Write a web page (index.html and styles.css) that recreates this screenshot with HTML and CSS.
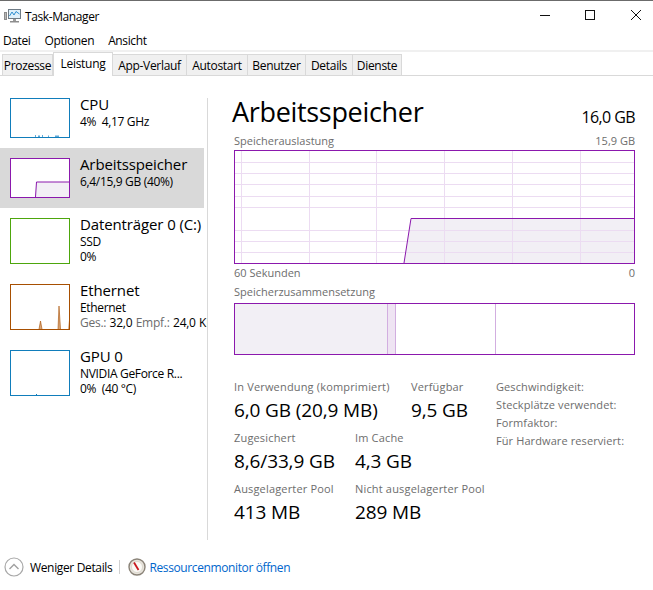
FILE: index.html
```html
<!DOCTYPE html>
<html lang="de">
<head>
<meta charset="utf-8">
<title>Task-Manager</title>
<link rel="stylesheet" href="styles.css">
</head>
<body>
<div class="window">
  <header class="titlebar">
    <div class="title-left">
      <svg class="app-icon" width="17" height="16" viewBox="0 0 17 16">
        <rect x="0.5" y="4.5" width="2" height="7" fill="#b8b8b8" stroke="#8c8c8c" stroke-width="1"/>
        <rect x="4.5" y="1.5" width="12" height="9" fill="#dff0fa" stroke="#6e7b85"/>
        <path d="M5.5 8 L8 4 L10 7 L12 3.5 L15.5 6" fill="none" stroke="#2f8fd0" stroke-width="1"/>
        <rect x="9" y="11" width="3" height="2" fill="#9a9a9a"/>
        <rect x="6" y="13" width="9" height="1.5" fill="#8d8d8d"/>
      </svg>
      <span class="title-text">Task-Manager</span>
    </div>
    <div class="win-controls">
      <svg class="win-btn" width="46" height="14" viewBox="0 0 46 14"><path d="M25 6.5 H35" stroke="#111" stroke-width="1"/></svg>
      <svg class="win-btn" width="46" height="14" viewBox="0 0 46 14"><rect x="24.5" y="1.5" width="9" height="9" fill="none" stroke="#111" stroke-width="1"/></svg>
      <svg class="win-btn" width="46" height="14" viewBox="0 0 46 14"><path d="M24 1 L34 11 M34 1 L24 11" stroke="#111" stroke-width="1"/></svg>
    </div>
  </header>

  <nav class="menu">
    <span>Datei</span><span>Optionen</span><span>Ansicht</span>
  </nav>

  <div class="tabs">
    <span class="tab tab-prozesse">Prozesse</span>
    <span class="tab tab-active tab-leistung">Leistung</span>
    <span class="tab tab-app">App-Verlauf</span>
    <span class="tab tab-auto">Autostart</span>
    <span class="tab tab-benutzer">Benutzer</span>
    <span class="tab tab-details">Details</span>
    <span class="tab tab-dienste">Dienste</span>
  </div>

  <main class="content">
    <aside class="sidebar">
      <div class="item item-short">
        <svg class="thumb thumb-short" viewBox="0 0 60 40">
          <path d="M25 39 V37 H26 V39 H28 V37.500 H30 V39 H32 V37 H33 V39 H38 V37.500 H39 V39 H45 V37.500 H49 V39 Z" fill="#5fa9d8"/>
          <rect x="0.5" y="0.5" width="59" height="39" fill="none" stroke="#117dbb"/>
        </svg>
        <div class="item-text">
          <div class="name">CPU</div>
          <div class="sub">4%&nbsp; 4,17 GHz</div>
        </div>
      </div>
      <div class="item item-short selected">
        <svg class="thumb thumb-short" viewBox="0 0 60 40">
          <path d="M25 39 L26.500 24 H59 V39 Z" fill="#f2eff5"/>
          <path d="M25.500 39 L26.500 24 H59" fill="none" stroke="#8b18ad"/>
          <rect x="0.5" y="0.5" width="59" height="39" fill="none" stroke="#8b18ad"/>
        </svg>
        <div class="item-text">
          <div class="name">Arbeitsspeicher</div>
          <div class="sub">6,4/15,9 GB (40%)</div>
        </div>
      </div>
      <div class="item">
        <svg class="thumb" viewBox="0 0 60 46">
          <rect x="0.5" y="0.5" width="59" height="45" fill="#fff" stroke="#4da60c"/>
        </svg>
        <div class="item-text">
          <div class="name">Datenträger 0 (C:)</div>
          <div class="sub">SSD</div>
          <div class="sub">0%</div>
        </div>
      </div>
      <div class="item">
        <svg class="thumb" viewBox="0 0 60 46">
          <path d="M29 45 L30.500 37 L32 45 Z M48 45 L49 22 L50.500 45 Z M58 45 L59 36 V45 Z" fill="#d9a679"/>
          <path d="M29 45 L30.500 37 L32 45 M48 45 L49 22 L50.500 45" fill="none" stroke="#a74f01" stroke-width="0.6"/>
          <rect x="0.5" y="0.5" width="59" height="45" fill="none" stroke="#a74f01"/>
        </svg>
        <div class="item-text">
          <div class="name">Ethernet</div>
          <div class="sub">Ethernet</div>
          <div class="sub rates"><span class="muted">Ges.:</span> 32,0 <span class="muted">Empf.:</span> 24,0 KB</div>
        </div>
      </div>
      <div class="item">
        <svg class="thumb" viewBox="0 0 60 46">
          <rect x="26" y="44" width="1" height="1" fill="#117dbb"/>
          <rect x="0.5" y="0.5" width="59" height="45" fill="none" stroke="#117dbb"/>
        </svg>
        <div class="item-text">
          <div class="name">GPU 0</div>
          <div class="sub">NVIDIA GeForce R...</div>
          <div class="sub">0%&nbsp; (40 °C)</div>
        </div>
      </div>
    </aside>

    <section class="detail">
      <div class="heading">
        <h1>Arbeitsspeicher</h1>
        <span class="total">16,0 GB</span>
      </div>
      <div class="chart-label label-first"><span>Speicherauslastung</span><span>15,9 GB</span></div>
      <svg class="chart" viewBox="0 0 401 114">
        <path d="M170 113.500 L177 68.500 H400.500 V113.500 Z" fill="#f2eff5"/>
        <g stroke="#ecdcf2" stroke-width="1">
          <path d="M7.500 1 V113 M75.500 1 V113 M142.500 1 V113 M210.500 1 V113 M278.500 1 V113 M346.500 1 V113"/>
          <path d="M1 12.500 H400 M1 23.500 H400 M1 34.500 H400 M1 46.500 H400 M1 57.500 H400 M1 80.500 H400 M1 91.500 H400 M1 102.500 H400"/>
        </g>
        <path d="M170 113 L177 68.500 H400" fill="none" stroke="#8b18ad" stroke-width="1"/>
        <rect x="0.5" y="0.5" width="400" height="113" fill="none" stroke="#8b18ad"/>
      </svg>
      <div class="chart-label chart-foot"><span>60 Sekunden</span><span>0</span></div>
      <div class="chart-label comp-label"><span>Speicherzusammensetzung</span></div>
      <div class="comp">
        <div class="seg seg-used"></div>
        <div class="seg seg-mod"></div>
        <div class="seg seg-standby"></div>
        <div class="seg seg-free"></div>
      </div>

      <div class="stats">
        <div class="stats-left">
          <div class="stat-row">
            <div class="stat stat-wide"><div class="stat-label">In Verwendung (komprimiert)</div><div class="stat-value">6,0 GB (20,9 MB)</div></div>
            <div class="stat"><div class="stat-label">Verfügbar</div><div class="stat-value">9,5 GB</div></div>
          </div>
          <div class="stat-row">
            <div class="stat stat-narrow"><div class="stat-label">Zugesichert</div><div class="stat-value">8,6/33,9 GB</div></div>
            <div class="stat"><div class="stat-label">Im Cache</div><div class="stat-value">4,3 GB</div></div>
          </div>
          <div class="stat-row">
            <div class="stat stat-narrow"><div class="stat-label">Ausgelagerter Pool</div><div class="stat-value">413 MB</div></div>
            <div class="stat"><div class="stat-label">Nicht ausgelagerter Pool</div><div class="stat-value">289 MB</div></div>
          </div>
        </div>
        <ul class="specs">
          <li>Geschwindigkeit:</li>
          <li>Steckplätze verwendet:</li>
          <li>Formfaktor:</li>
          <li>Für Hardware reserviert:</li>
        </ul>
      </div>
    </section>
  </main>

  <footer class="footer">
    <svg class="less-icon" width="20" height="20" viewBox="0 0 20 20">
      <circle cx="10" cy="10" r="9" fill="#fff" stroke="#a8a8a8" stroke-width="1.2"/>
      <path d="M5.500 12 L10 7.500 L14.500 12" fill="none" stroke="#a0a0a0" stroke-width="1.4"/>
    </svg>
    <span class="less-text">Weniger Details</span>
    <span class="foot-sep"></span>
    <svg class="res-icon" width="18" height="18" viewBox="0 0 18 18">
      <circle cx="9" cy="9" r="8" fill="#e8e4dc" stroke="#8a8378" stroke-width="1.4"/>
      <circle cx="9" cy="9" r="5.500" fill="#fbfaf6" stroke="#cfc9bd" stroke-width="0.6"/>
      <path d="M6 4.500 L10.500 12" stroke="#c8171d" stroke-width="1.8"/>
    </svg>
    <span class="res-link">Ressourcenmonitor öffnen</span>
  </footer>
</div>
</body>
</html>
```
FILE: styles.css
```css
* { box-sizing: border-box; }
html, body { margin: 0; padding: 0; background: #fff; }
body { font-family: "Open Sans", "Noto Sans", sans-serif; color: #000; }
.window { width: 653px; height: 590px; overflow: hidden; display: flex; flex-direction: column; background: #fff; }

.titlebar { height: 31px; flex: none; border-top: 1px solid #6b6b6b; display: flex; justify-content: space-between; align-items: center; }
.title-left { display: flex; align-items: center; padding-left: 4px; gap: 4px; }
.title-text { font-size: 12px; letter-spacing: -0.4px; }
.win-controls { display: flex; align-items: center; }
.win-btn { display: block; }

.menu { height: 19px; flex: none; display: flex; gap: 14px; padding-left: 3px; font-size: 12px; letter-spacing: -0.38px; align-items: center; }

.tabs { height: 26px; flex: none; display: flex; align-items: flex-end; padding-left: 2px; border-top: 2px solid #f0f0f0; border-bottom: 1px solid #d9d9d9; }
.tab { height: 21px; font-size: 12px; letter-spacing: -0.3px; background: #f0f0f0; border: 1px solid #d9d9d9; border-bottom: none; border-left: none; display: flex; align-items: center; justify-content: center; }
.tab-prozesse { width: 51px; border-left: 1px solid #d9d9d9; }
.tab-leistung { width: 60px; }
.tab-app { width: 74px; }
.tab-auto { width: 61px; }
.tab-benutzer { width: 58px; }
.tab-details { width: 47px; }
.tab-dienste { width: 49px; }
.tab-active { height: 24px; background: #fff; margin-bottom: -1px; border-left: 1px solid #d9d9d9; padding-bottom: 3px; }

.content { flex: 1; display: flex; min-height: 0; }
.sidebar { width: 208px; flex: none; margin-top: 22px; height: 442px; border-right: 1px solid #d9d9d9; display: flex; flex-direction: column; }
.item { height: 66px; width: 207px; padding-left: 10px; padding-top: 10px; display: flex; gap: 10px; overflow: hidden; }
.item-short { height: 60px; width: 204px; }
.sidebar .item:first-child { height: 50px; padding-top: 0; }
.selected { background: #d9d9d9; }
.thumb { width: 60px; height: 46px; flex: none; display: block; background: #fff; }
.thumb-short { height: 40px; }
.item-text { min-width: 0; white-space: nowrap; margin-top: -4px; }
.name { font-size: 15px; line-height: 20px; letter-spacing: -0.12px; }
.sub { font-size: 12px; line-height: 15px; letter-spacing: -0.33px; }
.muted { color: #6d6d6d; }
.sub.rates { letter-spacing: -0.25px; word-spacing: 0.5px; }

.detail { flex: 1; padding: 17px 18px 0 26px; min-width: 0; }
.heading { display: flex; justify-content: space-between; align-items: flex-end; height: 38px; margin-left: -2px; }
h1 { margin: 0; font-size: 27px; font-weight: 400; line-height: 38px; letter-spacing: -0.32px; }
.total { font-size: 16px; line-height: 26px; letter-spacing: -0.6px; margin-bottom: 1px; }
.chart-label { display: flex; justify-content: space-between; font-size: 11px; line-height: 14px; height: 14px; color: #6d6d6d; letter-spacing: 0; margin-top: 6px; }
.label-first { margin-top: 3px; }
.chart { display: block; width: 401px; height: 114px; margin-top: 2px; }
.chart-foot { margin-top: 2px; }
.comp-label { margin-top: 5px; }
.comp { display: flex; width: 401px; height: 52px; margin-top: 4px; border: 1px solid #8b18ad; }
.seg { height: 100%; }
.seg-used { width: 153px; background: #f2eff5; border-right: 1px solid #d2aee0; }
.seg-mod { width: 8px; background: #efe4f3; border-right: 1px solid #d2aee0; }
.seg-standby { width: 100px; border-right: 1px solid #d2aee0; }
.seg-free { flex: 1; }

.stats { display: flex; margin-top: 24px; }
.stats-left { width: 262px; flex: none; }
.stat-row { display: flex; height: 51px; }
.stat-wide { width: 177px; }
.stat-narrow { width: 121px; }
.stat-label { font-size: 11px; line-height: 16px; color: #6d6d6d; letter-spacing: 0.17px; white-space: nowrap; }
.stat-value { font-size: 19px; line-height: 26px; letter-spacing: -0.12px; margin-top: 2px; white-space: nowrap; }
.specs { list-style: none; margin: -1px 0 0; padding: 0; font-size: 11px; line-height: 18px; color: #6d6d6d; letter-spacing: 0.1px; white-space: nowrap; }

.footer { height: 42px; flex: none; display: flex; align-items: center; padding: 0 0 4px 4px; }
.less-text { font-size: 12px; letter-spacing: -0.35px; margin-left: 6px; }
.foot-sep { width: 1px; height: 14px; background: #d0d0d0; margin: 0 8px 0 7px; }
.res-link { font-size: 12px; letter-spacing: -0.38px; color: #0066cc; margin-left: 3px; }
```
